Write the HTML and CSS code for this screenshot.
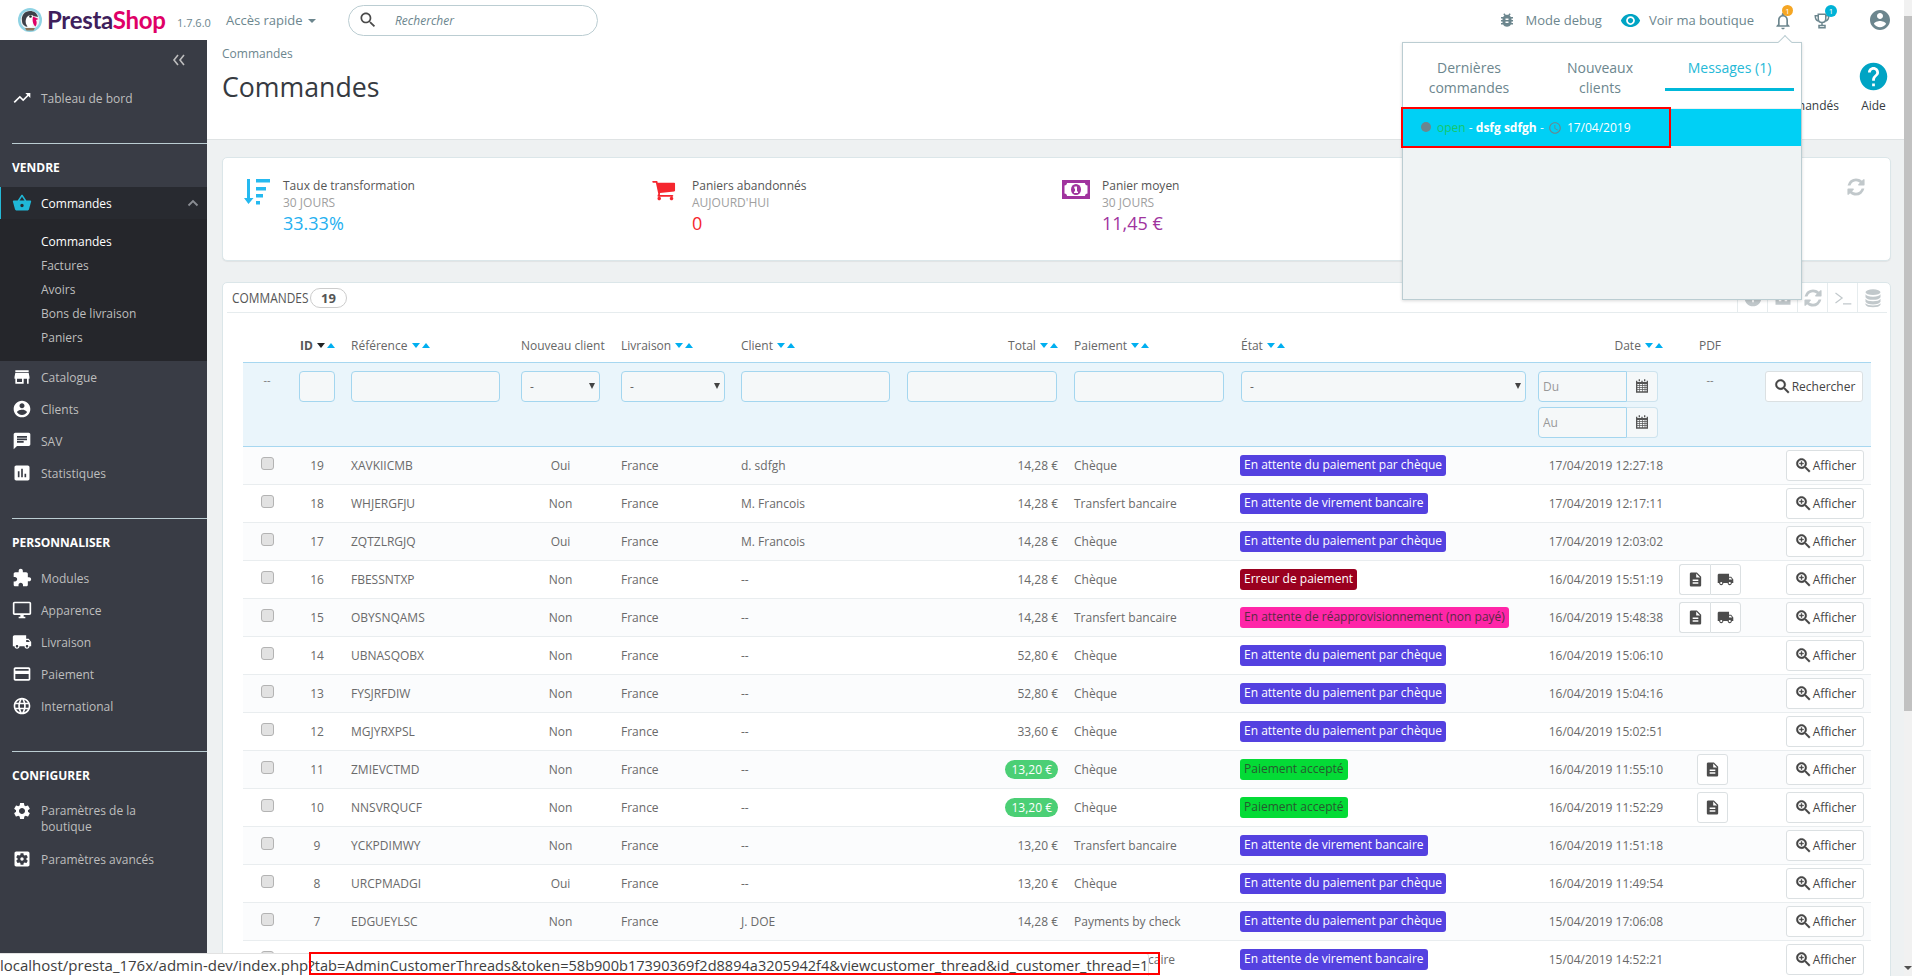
FILE: index.html
```html
<!DOCTYPE html>
<html lang="fr">
<head>
<meta charset="utf-8">
<title>Commandes - PrestaShop</title>
<link rel="stylesheet" href="styles.css">
</head>
<body>
<svg class="defs" aria-hidden="true">
  <symbol id="i-trend" viewBox="0 0 24 24"><path d="M16 6l2.29 2.29-4.88 4.88-4-4L2 16.59 3.41 18l6-6 4 4 6.3-6.29L22 12V6z"/></symbol>
  <symbol id="i-basket" viewBox="0 0 24 24"><path d="M17.21 9l-4.38-6.56c-.19-.28-.51-.42-.83-.42-.32 0-.64.14-.83.43L6.79 9H2c-.55 0-1 .45-1 1 0 .09.01.18.04.27l2.54 9.27c.23.84 1 1.46 1.92 1.46h13c.92 0 1.69-.62 1.93-1.46l2.54-9.27L23 10c0-.55-.45-1-1-1h-4.79zM9 9l3-4.4L15 9H9zm3 8c-1.1 0-2-.9-2-2s.9-2 2-2 2 .9 2 2-.9 2-2 2z"/></symbol>
  <symbol id="i-store" viewBox="0 0 24 24"><path d="M20 4H4v2h16V4zm1 10v-2l-1-5H4l-1 5v2h1v6h10v-6h4v6h2v-6h1zm-9 4H6v-4h6v4z"/></symbol>
  <symbol id="i-account" viewBox="0 0 24 24"><path d="M12 2C6.48 2 2 6.48 2 12s4.48 10 10 10 10-4.48 10-10S17.52 2 12 2zm0 3c1.66 0 3 1.34 3 3s-1.34 3-3 3-3-1.34-3-3 1.34-3 3-3zm0 14.2c-2.5 0-4.71-1.28-6-3.22.03-1.99 4-3.08 6-3.08 1.99 0 5.97 1.09 6 3.08-1.29 1.94-3.5 3.22-6 3.22z"/></symbol>
  <symbol id="i-chat" viewBox="0 0 24 24"><path d="M20 2H4c-1.1 0-1.99.9-1.99 2L2 22l4-4h14c1.1 0 2-.9 2-2V4c0-1.1-.9-2-2-2zM6 9h12v2H6V9zm8 5H6v-2h8v2zm4-6H6V6h12v2z"/></symbol>
  <symbol id="i-stats" viewBox="0 0 24 24"><path d="M19 3H5c-1.1 0-2 .9-2 2v14c0 1.1.9 2 2 2h14c1.1 0 2-.9 2-2V5c0-1.1-.9-2-2-2zM9 17H7v-7h2v7zm4 0h-2V7h2v10zm4 0h-2v-4h2v4z"/></symbol>
  <symbol id="i-puzzle" viewBox="0 0 24 24"><path d="M20.5 11H19V7c0-1.1-.9-2-2-2h-4V3.5C13 2.12 11.88 1 10.5 1S8 2.12 8 3.5V5H4c-1.1 0-1.99.9-1.99 2v3.8H3.5c1.49 0 2.7 1.21 2.7 2.7s-1.21 2.7-2.7 2.7H2V20c0 1.1.9 2 2 2h3.8v-1.5c0-1.49 1.21-2.7 2.7-2.7 1.49 0 2.7 1.21 2.7 2.7V22H17c1.1 0 2-.9 2-2v-4h1.5c1.38 0 2.5-1.12 2.5-2.5S21.88 11 20.5 11z"/></symbol>
  <symbol id="i-desktop" viewBox="0 0 24 24"><path d="M21 2H3c-1.1 0-2 .9-2 2v12c0 1.1.9 2 2 2h7v2H8v2h8v-2h-2v-2h7c1.1 0 2-.9 2-2V4c0-1.1-.9-2-2-2zm0 14H3V4h18v12z"/></symbol>
  <symbol id="i-truck" viewBox="0 0 24 24"><path d="M20 8h-3V4H3c-1.1 0-2 .9-2 2v11h2c0 1.66 1.34 3 3 3s3-1.34 3-3h6c0 1.66 1.34 3 3 3s3-1.34 3-3h2v-5l-3-4zM6 18.5c-.83 0-1.5-.67-1.5-1.5s.67-1.5 1.5-1.5 1.5.67 1.5 1.5-.67 1.5-1.5 1.5zm13.5-9l1.96 2.5H17V9.5h2.5zm-1.5 9c-.83 0-1.5-.67-1.5-1.5s.67-1.5 1.5-1.5 1.5.67 1.5 1.5-.67 1.5-1.5 1.5z"/></symbol>
  <symbol id="i-card" viewBox="0 0 24 24"><path d="M20 4H4c-1.11 0-1.99.89-1.99 2L2 18c0 1.11.89 2 2 2h16c1.11 0 2-.89 2-2V6c0-1.11-.89-2-2-2zm0 14H4v-6h16v6zm0-10H4V6h16v2z"/></symbol>
  <symbol id="i-globe" viewBox="0 0 24 24"><path d="M11.99 2C6.47 2 2 6.48 2 12s4.47 10 9.99 10C17.52 22 22 17.52 22 12S17.52 2 11.99 2zm6.93 6h-2.95c-.32-1.25-.78-2.45-1.38-3.56 1.84.63 3.37 1.91 4.33 3.56zM12 4.04c.83 1.2 1.48 2.53 1.91 3.96h-3.82c.43-1.43 1.08-2.76 1.91-3.96zM4.26 14C4.1 13.36 4 12.69 4 12s.1-1.36.26-2h3.38c-.08.66-.14 1.32-.14 2 0 .68.06 1.34.14 2H4.26zm.82 2h2.95c.32 1.25.78 2.45 1.38 3.56-1.84-.63-3.37-1.9-4.33-3.56zm2.95-8H5.08c.96-1.66 2.49-2.93 4.33-3.56C8.81 5.55 8.35 6.75 8.03 8zM12 19.96c-.83-1.2-1.48-2.53-1.91-3.96h3.82c-.43 1.43-1.08 2.76-1.91 3.96zM14.34 14H9.66c-.09-.66-.16-1.32-.16-2 0-.68.07-1.35.16-2h4.68c.09.65.16 1.32.16 2 0 .68-.07 1.34-.16 2zm.25 5.56c.6-1.11 1.06-2.31 1.38-3.56h2.95c-.96 1.65-2.49 2.93-4.33 3.56zM16.36 14c.08-.66.14-1.32.14-2 0-.68-.06-1.34-.14-2h3.38c.16.64.26 1.31.26 2s-.1 1.36-.26 2h-3.38z"/></symbol>
  <symbol id="i-gear" viewBox="0 0 24 24"><path d="M19.14 12.94c.04-.3.06-.61.06-.94 0-.32-.02-.64-.07-.94l2.03-1.58c.18-.14.23-.41.12-.61l-1.92-3.32c-.12-.22-.37-.29-.59-.22l-2.39.96c-.5-.38-1.03-.7-1.62-.94l-.36-2.54c-.04-.24-.24-.41-.48-.41h-3.84c-.24 0-.43.17-.47.41l-.36 2.54c-.59.24-1.13.57-1.62.94l-2.39-.96c-.22-.08-.47 0-.59.22L2.74 8.87c-.12.21-.08.47.12.61l2.03 1.58c-.05.3-.09.63-.09.94s.02.64.07.94l-2.03 1.58c-.18.14-.23.41-.12.61l1.92 3.32c.12.22.37.29.59.22l2.39-.96c.5.38 1.03.7 1.62.94l.36 2.54c.05.24.24.41.48.41h3.84c.24 0 .44-.17.47-.41l.36-2.54c.59-.24 1.13-.56 1.62-.94l2.39.96c.22.08.47 0 .59-.22l1.92-3.32c.12-.22.07-.47-.12-.61l-2.01-1.58zM12 15.6c-1.98 0-3.6-1.62-3.6-3.6s1.62-3.6 3.6-3.6 3.6 1.62 3.6 3.6-1.62 3.6-3.6 3.6z"/></symbol>
  <symbol id="i-gearbox" viewBox="0 0 24 24"><path d="M12 10c-1.1 0-2 .9-2 2s.9 2 2 2 2-.9 2-2-.9-2-2-2zm7-7H5c-1.11 0-2 .9-2 2v14c0 1.1.89 2 2 2h14c1.11 0 2-.9 2-2V5c0-1.1-.89-2-2-2zm-1.75 9c0 .23-.02.46-.05.68l1.48 1.16c.13.11.17.3.08.45l-1.4 2.42c-.09.15-.27.21-.43.15l-1.74-.7c-.36.28-.76.51-1.18.69l-.26 1.85c-.03.17-.18.3-.35.3h-2.8c-.17 0-.32-.13-.35-.29l-.26-1.85c-.43-.18-.82-.41-1.18-.69l-1.74.7c-.16.06-.34 0-.43-.15l-1.4-2.42c-.09-.15-.05-.34.08-.45l1.48-1.16c-.03-.23-.05-.46-.05-.69 0-.23.02-.46.05-.68l-1.48-1.16c-.13-.11-.17-.3-.08-.45l1.4-2.42c.09-.15.27-.21.43-.15l1.74.7c.36-.28.76-.51 1.18-.69l.26-1.85c.03-.17.18-.3.35-.3h2.8c.17 0 .32.13.35.29l.26 1.85c.43.18.82.41 1.18.69l1.74-.7c.16-.06.34 0 .43.15l1.4 2.42c.09.15.05.34-.08.45l-1.48 1.16c.03.23.05.46.05.69z"/></symbol>
  <symbol id="i-bug" viewBox="0 0 24 24"><path d="M20 8h-2.81c-.45-.78-1.07-1.45-1.82-1.96L17 4.41 15.59 3l-2.17 2.17C12.96 5.06 12.49 5 12 5c-.49 0-.96.06-1.41.17L8.41 3 7 4.41l1.62 1.63C7.88 6.55 7.26 7.22 6.81 8H4v2h2.09c-.05.33-.09.66-.09 1v1H4v2h2v1c0 .34.04.67.09 1H4v2h2.81c1.04 1.79 2.97 3 5.19 3s4.15-1.21 5.19-3H20v-2h-2.09c.05-.33.09-.66.09-1v-1h2v-2h-2v-1c0-.34-.04-.67-.09-1H20V8zm-6 8h-4v-2h4v2zm0-4h-4v-2h4v2z"/></symbol>
  <symbol id="i-eye" viewBox="0 0 24 24"><path d="M12 4.5C7 4.5 2.73 7.61 1 12c1.73 4.39 6 7.5 11 7.5s9.27-3.11 11-7.5c-1.73-4.39-6-7.5-11-7.5zM12 17c-2.76 0-5-2.24-5-5s2.24-5 5-5 5 2.24 5 5-2.24 5-5 5zm0-8c-1.66 0-3 1.34-3 3s1.34 3 3 3 3-1.34 3-3-1.34-3-3-3z"/></symbol>
  <symbol id="i-bell" viewBox="0 0 24 24"><path d="M12 22c1.1 0 2-.9 2-2h-4c0 1.1.9 2 2 2zm6-6v-5c0-3.07-1.63-5.64-4.5-6.32V4c0-.83-.67-1.5-1.5-1.5s-1.5.67-1.5 1.5v.68C7.64 5.36 6 7.92 6 11v5l-2 2v1h16v-1l-2-2zm-2 1H8v-6c0-2.48 1.51-4.5 4-4.5s4 2.02 4 4.5v6z"/></symbol>
  <symbol id="i-trophy" viewBox="0 0 24 24"><path fill="none" stroke="currentColor" stroke-width="2" d="M7 3h10v6c0 3-2 5-5 5s-5-2-5-5V3zM7 5H3c0 4 1 6 4 7M17 5h4c0 4-1 6-4 7M12 14v4M8 18h8v3H8z"/></symbol>
  <symbol id="i-cart" viewBox="0 0 1792 1530"><path transform="translate(-64 -192)" d="M704 1536q0 52-38 90t-90 38-90-38-38-90 38-90 90-38 90 38 38 90zm896 0q0 52-38 90t-90 38-90-38-38-90 38-90 90-38 90 38 38 90zm128-1088v512q0 24-16.500 42.500t-40.500 21.500l-1044 122q13 60 13 70 0 16-24 64h920q26 0 45 19t19 45-19 45-45 19h-1024q-26 0-45-19t-19-45q0-11 8-31.500t16-36 21.500-40 15.500-29.500l-177-823h-204q-26 0-45-19t-19-45 19-45 45-19h256q16 0 28.500 6.500t19.500 15.500 13 24.500 8 26 5.500 29.500 4.500 26h1201q26 0 45 19t19 45z"/></symbol>
  <symbol id="i-help" viewBox="0 0 24 24"><path d="M12 2C6.48 2 2 6.48 2 12s4.48 10 10 10 10-4.48 10-10S17.52 2 12 2zm1 17h-2v-2h2v2zm2.07-7.75l-.9.92C13.45 12.9 13 13.5 13 15h-2v-.5c0-1.1.45-2.1 1.17-2.83l1.24-1.26c.37-.36.59-.86.59-1.41 0-1.1-.9-2-2-2s-2 .9-2 2H8c0-2.21 1.79-4 4-4s4 1.79 4 4c0 .88-.36 1.68-.93 2.25z"/></symbol>
  <symbol id="i-refresh" viewBox="0 0 1792 1792"><path d="M1639 1056q0 5-1 7-64 268-268 434.500t-478 166.500q-146 0-282.500-55t-243.500-157l-129 129q-19 19-45 19t-45-19-19-45v-448q0-26 19-45t45-19h448q26 0 45 19t19 45-19 45l-137 137q71 66 161 102t187 36q134 0 250-65t186-179q11-17 53-117 8-23 30-23h192q13 0 22.500 9.500t9.500 22.500zm25-800v448q0 26-19 45t-45 19h-448q-26 0-45-19t-19-45 19-45l138-138q-148-137-349-137-134 0-250 65t-186 179q-11 17-53 117-8 23-30 23h-199q-13 0-22.500-9.500t-9.500-22.500v-7q65-268 270-434.500t480-166.500q146 0 284 55.500t245 156.500l130-129q19-19 45-19t45 19 19 45z"/></symbol>
  <symbol id="i-clock" viewBox="0 0 24 24"><path d="M11.99 2C6.47 2 2 6.48 2 12s4.47 10 9.99 10C17.52 22 22 17.52 22 12S17.52 2 11.99 2zM12 20c-4.42 0-8-3.58-8-8s3.58-8 8-8 8 3.58 8 8-3.58 8-8 8zm.5-13H11v6l5.25 3.15.75-1.23-4.5-2.67z"/></symbol>
  <symbol id="i-search" viewBox="0 0 24 24"><path d="M15.5 14h-.79l-.28-.27C15.41 12.59 16 11.11 16 9.5 16 5.91 13.09 3 9.5 3S3 5.91 3 9.5 5.91 16 9.5 16c1.61 0 3.09-.59 4.23-1.57l.27.28v.79l5 4.99L20.49 19l-4.99-5zm-6 0C7.01 14 5 11.99 5 9.5S7.01 5 9.5 5 14 7.01 14 9.5 11.99 14 9.5 14z"/></symbol>
  <symbol id="i-zoom" viewBox="0 0 24 24"><path d="M15.5 14h-.79l-.28-.27C15.41 12.59 16 11.11 16 9.5 16 5.91 13.09 3 9.5 3S3 5.91 3 9.5 5.91 16 9.5 16c1.61 0 3.09-.59 4.23-1.57l.27.28v.79l5 4.99L20.49 19l-4.99-5zm-6 0C7.01 14 5 11.99 5 9.5S7.01 5 9.5 5 14 7.01 14 9.5 11.99 14 9.5 14zM12 10h-2v2H9v-2H7V9h2V7h1v2h2v1z"/></symbol>
  <symbol id="i-doc" viewBox="0 0 24 24"><path d="M14 2H6c-1.1 0-1.99.9-1.99 2L4 20c0 1.1.89 2 1.99 2H18c1.1 0 2-.9 2-2V8l-6-6zm2 16H8v-2h8v2zm0-4H8v-2h8v2zm-3-5V3.5L18.5 9H13z"/></symbol>
  <symbol id="i-cal" viewBox="0 0 24 24"><path d="M7 2h2v3H7zM15 2h2v3h-2z"/><path fill-rule="evenodd" d="M3 4h2v2h6V4h2v2h6V4h2v18H3zM5 9v2h3V9zm4 0v2h3V9zm4 0v2h3V9zm4 0v2h2V9zM5 12v2h3v-2zm4 0v2h3v-2zm4 0v2h3v-2zm4 0v2h2v-2zM5 15v2h3v-2zm4 0v2h3v-2zm4 0v2h3v-2zm4 0v2h2v-2zM5 18v2h3v-2zm4 0v2h3v-2zm4 0v2h3v-2zm4 0v2h2v-2z"/></symbol>
  <symbol id="i-plus" viewBox="0 0 24 24"><path d="M12 2C6.48 2 2 6.48 2 12s4.48 10 10 10 10-4.48 10-10S17.52 2 12 2zm5 11h-4v4h-2v-4H7v-2h4V7h2v4h4v2z"/></symbol>
  <symbol id="i-export" viewBox="0 0 24 24"><path d="M3 4h18v16H3zM7 16h3v-4l2 2 2-2v4h3V8h-3l-2 2-2-2H7z" fill-rule="evenodd"/></symbol>
  <symbol id="i-term" viewBox="0 0 24 24"><path fill="none" stroke="currentColor" stroke-width="1.4" d="M3 6l8 6-8 6M12 19h10"/></symbol>
  <symbol id="i-db" viewBox="0 0 24 24"><ellipse cx="12" cy="5" rx="9" ry="3.4"/><path d="M3 7.5c1 2 4 3 9 3s8-1 9-3V11c-1 2-4 3.200-9 3.200S4 13 3 11zM3 13c1 2 4 3 9 3s8-1 9-3v3.500c-1 2-4 3.200-9 3.200S4 18.500 3 16.500zM3 18.300c1.500 1.700 5 2.700 9 2.700s7.500-1 9-2.700V20c-1 2-4 3-9 3s-8-1-9-3z"/></symbol>
</svg>

<div class="app">
  <header class="topbar">
    <a class="logo">
      <svg class="logo-bird" viewBox="0 0 24 24" aria-hidden="true">
        <circle cx="12" cy="12" r="12" fill="#8fd3e4"/>
        <circle cx="12" cy="12" r="9.500" fill="#eef3f4"/>
        <path d="M4 13C3 7 7 3 12 3c4 0 7 2 8 6-3-1-5-1-7 0-3 1-4 4-3 9-1 1-2 1-3 0-2-1-3-3-3-5z" fill="#3d4149"/>
        <path d="M8 11c1-3 3-4 5-4 2 0 3 1 3 3l-2 9-4 0c-2-2-3-5-2-8z" fill="#fff"/>
        <circle cx="12.500" cy="8.500" r="1.300" fill="#23262b"/>
        <path d="M15 8.500l5.500 2.500-2.500 1c1 2 1 4-.5 6.500-2.500-2-3.500-6-2.500-10z" fill="#df0067"/>
        <path d="M7 20h10l-1.500 2.500h-7z" fill="#8a7458"/>
      </svg>
      <span class="logo-text"><span class="logo-a">Presta</span><span class="logo-b">Shop</span></span>
    </a>
    <span class="version">1.7.6.0</span>
    <a class="quick">Accès rapide<i class="tri"></i></a>
    <div class="searchbox">
      <svg class="ico-search"><use href="#i-search"/></svg>
      <span class="search-ph">Rechercher</span>
    </div>
    <div class="top-right">
      <svg class="ico-top gray"><use href="#i-bug"/></svg>
      <span class="top-link">Mode debug</span>
      <svg class="ico-eye"><use href="#i-eye"/></svg>
      <span class="top-link">Voir ma boutique</span>
      <span class="notif bell"><svg class="ico-bell"><use href="#i-bell"/></svg><b class="dot dot-o">1</b></span>
      <span class="notif trophy"><svg class="ico-trophy"><use href="#i-trophy"/></svg><b class="dot dot-c">1</b></span>
      <svg class="ico-user"><use href="#i-account"/></svg>
    </div>
  </header>

  <div class="layout">
    <aside class="sidebar">
      <div class="collapse"><svg viewBox="0 0 14 12" class="ico-coll"><path d="M6 1L2 6l4 5M12 1L8 6l4 5"/></svg></div>
      <a class="item"><svg><use href="#i-trend"/></svg><span>Tableau de bord</span></a>
      <div class="sec sec-first">VENDRE</div>
      <a class="item active"><svg><use href="#i-basket"/></svg><span>Commandes</span><svg class="ico-chev" viewBox="0 0 12 8"><path d="M1.500 6.500L6 2l4.500 4.500"/></svg></a>
      <div class="sub">
        <a class="sub-item on">Commandes</a>
        <a class="sub-item">Factures</a>
        <a class="sub-item">Avoirs</a>
        <a class="sub-item">Bons de livraison</a>
        <a class="sub-item">Paniers</a>
      </div>
      <a class="item"><svg><use href="#i-store"/></svg><span>Catalogue</span></a>
      <a class="item"><svg><use href="#i-account"/></svg><span>Clients</span></a>
      <a class="item"><svg><use href="#i-chat"/></svg><span>SAV</span></a>
      <a class="item"><svg><use href="#i-stats"/></svg><span>Statistiques</span></a>
      <div class="sec">PERSONNALISER</div>
      <a class="item"><svg><use href="#i-puzzle"/></svg><span>Modules</span></a>
      <a class="item"><svg><use href="#i-desktop"/></svg><span>Apparence</span></a>
      <a class="item"><svg><use href="#i-truck"/></svg><span>Livraison</span></a>
      <a class="item"><svg><use href="#i-card"/></svg><span>Paiement</span></a>
      <a class="item"><svg><use href="#i-globe"/></svg><span>International</span></a>
      <div class="sec">CONFIGURER</div>
      <a class="item item-two"><svg><use href="#i-gear"/></svg><span>Paramètres de la boutique</span></a>
      <a class="item"><svg><use href="#i-gearbox"/></svg><span>Paramètres avancés</span></a>
    </aside>

    <main class="main">
      <section class="head">
        <div class="head-left">
          <div class="crumb">Commandes</div>
          <h1 class="title">Commandes</h1>
        </div>
        <div class="toolbar">
          <a class="tool"><span class="tool-label">Modules recommandés</span></a>
          <a class="tool"><svg class="ico-help"><use href="#i-help"/></svg><span class="tool-label">Aide</span></a>
        </div>
      </section>

      <section class="kpis">
        <div class="kpi kpi-1">
          <svg class="kpi-ico" viewBox="0 0 26 28" aria-hidden="true"><path fill="#25b9f0" d="M3 1h3v19h3.500L4.500 26 0 20h3zM12 1h14v3.500H12zM12 9h10v3.500H12zM12 16h7v3.500h-7zM12 23h4v3.500h-4z"/></svg>
          <div><div class="kpi-t">Taux de transformation</div><div class="kpi-s">30 JOURS</div><div class="kpi-v v-blue">33.33%</div></div>
        </div>
        <div class="kpi kpi-2">
          <svg class="kpi-ico cart-ico"><use href="#i-cart"/></svg>
          <div><div class="kpi-t">Paniers abandonnés</div><div class="kpi-s">AUJOURD'HUI</div><div class="kpi-v v-red">0</div></div>
        </div>
        <div class="kpi kpi-3">
          <svg class="kpi-ico" viewBox="0 0 28 19" aria-hidden="true"><path fill="#a0339e" fill-rule="evenodd" d="M0 0h28v19H0zM5 3c0 1.500-1 2.500-2.500 2.500v8C4 13.500 5 14.500 5 16h18c0-1.500 1-2.500 2.500-2.500v-8C24 5.500 23 4.500 23 3z"/><ellipse cx="14" cy="9.500" rx="5" ry="5.500" fill="#a0339e"/><path fill="#fff" d="M12.500 6.500h2.500v5h1v1.500h-4v-1.500h1V8.500h-1z"/></svg>
          <div><div class="kpi-t">Panier moyen</div><div class="kpi-s">30 JOURS</div><div class="kpi-v v-purple">11,45 €</div></div>
        </div>
        <svg class="kpi-refresh"><use href="#i-refresh"/></svg>
      </section>

      <section class="panel">
        <div class="panel-head">
          <span class="panel-title">COMMANDES</span>
          <span class="panel-count">19</span>
          <div class="panel-tools">
            <span class="ptool"><svg><use href="#i-plus"/></svg></span>
            <span class="ptool"><svg><use href="#i-export"/></svg></span>
            <span class="ptool"><svg><use href="#i-refresh"/></svg></span>
            <span class="ptool"><svg><use href="#i-term"/></svg></span>
            <span class="ptool"><svg><use href="#i-db"/></svg></span>
          </div>
        </div>
        <table class="grid">
          <colgroup>
            <col class="c-check"><col class="c-id"><col class="c-ref"><col class="c-new"><col class="c-del"><col class="c-cli"><col class="c-tot"><col class="c-pay"><col class="c-sta"><col class="c-dat"><col class="c-pdf"><col class="c-act">
          </colgroup>
          <thead>
            <tr class="heads">
              <th></th>
              <th class="bold">ID <i class="dn dark"></i><i class="up"></i></th>
              <th>Référence <i class="dn"></i><i class="up"></i></th>
              <th class="cnew">Nouveau client</th>
              <th>Livraison <i class="dn"></i><i class="up"></i></th>
              <th>Client <i class="dn"></i><i class="up"></i></th>
              <th class="right">Total <i class="dn"></i><i class="up"></i></th>
              <th>Paiement <i class="dn"></i><i class="up"></i></th>
              <th>État <i class="dn"></i><i class="up"></i></th>
              <th class="right">Date <i class="dn"></i><i class="up"></i></th>
              <th class="cpdf">PDF</th>
              <th></th>
            </tr>
            <tr class="filters">
              <td class="center"><span class="dash">--</span></td>
              <td><input class="fi w-id"></td>
              <td><input class="fi w-ref"></td>
              <td><div class="sel w-new"><select class="fs"><option>-</option></select></div></td>
              <td><div class="sel w-del"><select class="fs"><option>-</option></select></div></td>
              <td><input class="fi w-ref"></td>
              <td><input class="fi w-tot"></td>
              <td><input class="fi w-tot"></td>
              <td><div class="sel w-sta"><select class="fs"><option>-</option></select></div></td>
              <td>
                <div class="dategroup"><input class="fd" placeholder="Du"><span class="addon"><svg><use href="#i-cal"/></svg></span></div>
                <div class="dategroup"><input class="fd" placeholder="Au"><span class="addon"><svg><use href="#i-cal"/></svg></span></div>
              </td>
              <td class="cpdf"><span class="dash">--</span></td>
              <td class="right"><button class="btn btn-search"><svg><use href="#i-search"/></svg>Rechercher</button></td>
            </tr>
          </thead>
          <tbody>
            <tr><td class="center"><i class="chk"></i></td><td class="tid">19</td><td>XAVKIICMB</td><td class="cnew">Oui</td><td>France</td><td>d. sdfgh</td><td class="right">14,28 €</td><td>Chèque</td><td><span class="badge b-blue">En attente du paiement par chèque</span></td><td class="right">17/04/2019 12:27:18</td><td class="cpdf"></td><td class="right"><button class="btn"><svg><use href="#i-zoom"/></svg>Afficher</button></td></tr>
            <tr><td class="center"><i class="chk"></i></td><td class="tid">18</td><td>WHJERGFJU</td><td class="cnew">Non</td><td>France</td><td>M. Francois</td><td class="right">14,28 €</td><td>Transfert bancaire</td><td><span class="badge b-blue">En attente de virement bancaire</span></td><td class="right">17/04/2019 12:17:11</td><td class="cpdf"></td><td class="right"><button class="btn"><svg><use href="#i-zoom"/></svg>Afficher</button></td></tr>
            <tr><td class="center"><i class="chk"></i></td><td class="tid">17</td><td>ZQTZLRGJQ</td><td class="cnew">Oui</td><td>France</td><td>M. Francois</td><td class="right">14,28 €</td><td>Chèque</td><td><span class="badge b-blue">En attente du paiement par chèque</span></td><td class="right">17/04/2019 12:03:02</td><td class="cpdf"></td><td class="right"><button class="btn"><svg><use href="#i-zoom"/></svg>Afficher</button></td></tr>
            <tr><td class="center"><i class="chk"></i></td><td class="tid">16</td><td>FBESSNTXP</td><td class="cnew">Non</td><td>France</td><td>--</td><td class="right">14,28 €</td><td>Chèque</td><td><span class="badge b-red">Erreur de paiement</span></td><td class="right">16/04/2019 15:51:19</td><td class="cpdf"><span class="bgroup"><button class="ib"><svg><use href="#i-doc"/></svg></button><button class="ib"><svg><use href="#i-truck"/></svg></button></span></td><td class="right"><button class="btn"><svg><use href="#i-zoom"/></svg>Afficher</button></td></tr>
            <tr><td class="center"><i class="chk"></i></td><td class="tid">15</td><td>OBYSNQAMS</td><td class="cnew">Non</td><td>France</td><td>--</td><td class="right">14,28 €</td><td>Transfert bancaire</td><td><span class="badge b-pink">En attente de réapprovisionnement (non payé)</span></td><td class="right">16/04/2019 15:48:38</td><td class="cpdf"><span class="bgroup"><button class="ib"><svg><use href="#i-doc"/></svg></button><button class="ib"><svg><use href="#i-truck"/></svg></button></span></td><td class="right"><button class="btn"><svg><use href="#i-zoom"/></svg>Afficher</button></td></tr>
            <tr><td class="center"><i class="chk"></i></td><td class="tid">14</td><td>UBNASQOBX</td><td class="cnew">Non</td><td>France</td><td>--</td><td class="right">52,80 €</td><td>Chèque</td><td><span class="badge b-blue">En attente du paiement par chèque</span></td><td class="right">16/04/2019 15:06:10</td><td class="cpdf"></td><td class="right"><button class="btn"><svg><use href="#i-zoom"/></svg>Afficher</button></td></tr>
            <tr><td class="center"><i class="chk"></i></td><td class="tid">13</td><td>FYSJRFDIW</td><td class="cnew">Non</td><td>France</td><td>--</td><td class="right">52,80 €</td><td>Chèque</td><td><span class="badge b-blue">En attente du paiement par chèque</span></td><td class="right">16/04/2019 15:04:16</td><td class="cpdf"></td><td class="right"><button class="btn"><svg><use href="#i-zoom"/></svg>Afficher</button></td></tr>
            <tr><td class="center"><i class="chk"></i></td><td class="tid">12</td><td>MGJYRXPSL</td><td class="cnew">Non</td><td>France</td><td>--</td><td class="right">33,60 €</td><td>Chèque</td><td><span class="badge b-blue">En attente du paiement par chèque</span></td><td class="right">16/04/2019 15:02:51</td><td class="cpdf"></td><td class="right"><button class="btn"><svg><use href="#i-zoom"/></svg>Afficher</button></td></tr>
            <tr><td class="center"><i class="chk"></i></td><td class="tid">11</td><td>ZMIEVCTMD</td><td class="cnew">Non</td><td>France</td><td>--</td><td class="right"><span class="pill">13,20 €</span></td><td>Chèque</td><td><span class="badge b-green">Paiement accepté</span></td><td class="right">16/04/2019 11:55:10</td><td class="cpdf"><button class="ib ib-one"><svg><use href="#i-doc"/></svg></button></td><td class="right"><button class="btn"><svg><use href="#i-zoom"/></svg>Afficher</button></td></tr>
            <tr><td class="center"><i class="chk"></i></td><td class="tid">10</td><td>NNSVRQUCF</td><td class="cnew">Non</td><td>France</td><td>--</td><td class="right"><span class="pill">13,20 €</span></td><td>Chèque</td><td><span class="badge b-green">Paiement accepté</span></td><td class="right">16/04/2019 11:52:29</td><td class="cpdf"><button class="ib ib-one"><svg><use href="#i-doc"/></svg></button></td><td class="right"><button class="btn"><svg><use href="#i-zoom"/></svg>Afficher</button></td></tr>
            <tr><td class="center"><i class="chk"></i></td><td class="tid">9</td><td>YCKPDIMWY</td><td class="cnew">Non</td><td>France</td><td>--</td><td class="right">13,20 €</td><td>Transfert bancaire</td><td><span class="badge b-blue">En attente de virement bancaire</span></td><td class="right">16/04/2019 11:51:18</td><td class="cpdf"></td><td class="right"><button class="btn"><svg><use href="#i-zoom"/></svg>Afficher</button></td></tr>
            <tr><td class="center"><i class="chk"></i></td><td class="tid">8</td><td>URCPMADGI</td><td class="cnew">Oui</td><td>France</td><td>--</td><td class="right">13,20 €</td><td>Chèque</td><td><span class="badge b-blue">En attente du paiement par chèque</span></td><td class="right">16/04/2019 11:49:54</td><td class="cpdf"></td><td class="right"><button class="btn"><svg><use href="#i-zoom"/></svg>Afficher</button></td></tr>
            <tr><td class="center"><i class="chk"></i></td><td class="tid">7</td><td>EDGUEYLSC</td><td class="cnew">Non</td><td>France</td><td>J. DOE</td><td class="right">14,28 €</td><td>Payments by check</td><td><span class="badge b-blue">En attente du paiement par chèque</span></td><td class="right">15/04/2019 17:06:08</td><td class="cpdf"></td><td class="right"><button class="btn"><svg><use href="#i-zoom"/></svg>Afficher</button></td></tr>
            <tr class="last"><td class="center"><i class="chk"></i></td><td></td><td></td><td></td><td></td><td></td><td></td><td class="partial">caire</td><td><span class="badge b-blue">En attente de virement bancaire</span></td><td class="right">15/04/2019 14:52:21</td><td class="cpdf"></td><td class="right"><button class="btn"><svg><use href="#i-zoom"/></svg>Afficher</button></td></tr>
          </tbody>
        </table>
      </section>
    </main>
  </div>
</div>

<div class="scrollbar">
  <i class="sb-up"></i>
  <div class="sb-thumb"></div>
  <div class="sb-track"></div>
  <i class="sb-down"></i>
</div>

<div class="dropdown">
  <i class="dd-arrow"></i>
  <div class="dd-tabs">
    <a class="dd-tab">Dernières<br>commandes</a>
    <a class="dd-tab">Nouveaux<br>clients</a>
    <a class="dd-tab on">Messages (1)</a>
  </div>
  <a class="dd-row">
    <i class="dd-dot"></i>
    <span class="dd-open">open</span>
    <span class="dd-sep">&nbsp;-&nbsp;</span><b>dsfg sdfgh</b><span class="dd-sep">&nbsp;-&nbsp;</span>
    <svg class="dd-clock"><use href="#i-clock"/></svg>
    <span class="dd-date">17/04/2019</span>
  </a>
</div>
<div class="redbox redbox-row"></div>

<div class="status"><span class="st-a">localhost/presta_176x/admin-dev/index.php?</span><span class="st-b">tab=AdminCustomerThreads&amp;token=58b900b17390369f2d8894a3205942f4&amp;viewcustomer_thread&amp;id_customer_thread=1</span></div>
<div class="redbox redbox-url"></div>
</body>
</html>
```

FILE: styles.css
```css
* { box-sizing: border-box; }
html, body { margin: 0; height: 976px; overflow: hidden; }
body { display: flex; position: relative; font-family: "Open Sans", sans-serif; font-size: 12px; color: #666; background: #eef1f2; }
.defs { position: absolute; width: 0; height: 0; }
a { text-decoration: none; color: inherit; }
i { font-style: normal; }

.app { flex: 1; min-width: 0; display: flex; flex-direction: column; }

/* scrollbar */
.scrollbar { flex: none; width: 8px; display: flex; flex-direction: column; background: #f1f1f1; }
.sb-up { height: 16px; flex: none; }
.sb-thumb { height: 695px; flex: none; background: #c1c1c1; }
.sb-track { flex: 1; }
.sb-down { flex: none; height: 16px; position: relative; }
.sb-down::after { content: ""; position: absolute; left: 0; top: 6px; border: 4px solid transparent; border-top: 4px solid #505050; border-bottom: 0; }

/* top bar */
.topbar { flex: none; height: 40px; background: #fff; display: flex; align-items: center; padding-left: 18px; }
.logo { display: flex; align-items: center; width: 159px; flex: none; }
.logo-bird { width: 24px; height: 24px; flex: none; }
.logo-text { margin-left: 5px; font-family: Lato, sans-serif; font-weight: 700; font-size: 24px; letter-spacing: -.3px; line-height: 30px; }
.logo-a { color: #3f1f5c; }
.logo-b { color: #df0067; }
.version { font-size: 11px; color: #6c868e; width: 49px; flex: none; padding-top: 4px; }
.quick { font-size: 13px; color: #6c868e; flex: none; width: 122px; }
.tri { display: inline-block; margin-left: 5px; vertical-align: 2px; border: 4px solid transparent; border-top: 4px solid #6c868e; border-bottom: 0; }
.searchbox { width: 250px; height: 31px; border: 1px solid #bbcdd2; border-radius: 16px; display: flex; align-items: center; padding-left: 9px; flex: none; }
.ico-search { width: 20px; height: 20px; fill: #4a4a4a; }
.search-ph { margin-left: 17px; font-style: italic; font-size: 12px; color: #6c868e; }
.top-right { margin-left: auto; display: flex; align-items: center; color: #6c868e; height: 40px; }
.ico-top { width: 18px; height: 18px; fill: #6c868e; margin-right: 10px; }
.top-link { font-size: 13px; color: #6c868e; }
.ico-eye { width: 21px; height: 21px; fill: #00a4c4; margin: 0 8px 0 18px; }
.notif { position: relative; display: block; width: 18px; height: 22px; }
.bell { margin-left: 20px; }
.trophy { margin-left: 21px; }
.ico-bell { width: 20px; height: 22px; fill: #6c868e; position: absolute; left: -1px; top: 1px; }
.ico-trophy { width: 18px; height: 20px; color: #6c868e; position: absolute; left: 0; top: 2px; }
.dot { position: absolute; top: -4px; left: 8px; width: 11px; height: 11px; border-radius: 50%; font-weight: 400; font-size: 8px; line-height: 11px; text-align: center; color: #fff; }
.dot-o { background: #f5a623; }
.dot-c { background: #00b2d6; left: 12px; width: 12px; height: 12px; line-height: 12px; }
.ico-user { width: 24px; height: 24px; fill: #6c868e; margin: 0 12px 0 37px; }

/* layout */
.layout { flex: 1; display: flex; min-height: 0; }
.sidebar { flex: none; width: 207px; background: #393c45; color: #bebebe; font-size: 12px; }
.collapse { height: 42px; display: flex; justify-content: flex-end; padding: 14px 21px 0 0; }
.ico-coll { width: 14px; height: 12px; fill: none; stroke: #bebebe; stroke-width: 1.600; }
.item { height: 32px; display: flex; align-items: center; padding-left: 12px; }
.item svg { width: 20px; height: 20px; fill: #fff; flex: none; margin-right: 9px; }
.item-two { height: 48px; line-height: 16px; }
.item-two svg { margin-top: -16px; }
.item-two span { width: 110px; }
.active { background: #282a30; color: #fff; border-left: 1px solid #25b9d7; padding-left: 11px; position: relative; }
.active svg { fill: #1fb8d8; }
.active .ico-chev { position: absolute; left: 186px; top: 12px; width: 12px; height: 8px; fill: none; stroke: #8a8d93; stroke-width: 1.800; margin: 0; }
.sub { background: #25262b; height: 142px; padding-top: 11px; }
.sub-item { display: block; height: 24px; line-height: 24px; padding-left: 41px; }
.sub-item.on { color: #fff; }
.sec { margin: 29px 0 0 12px; height: 44px; padding-top: 4px; border-top: 1px solid #bbcdd2; display: flex; align-items: center; color: #fff; font-weight: 700; font-size: 12px; }
.sec-first { margin-top: 29px; }

/* main */
.main { flex: 1; min-width: 0; overflow: hidden; }
.head { height: 100px; background: #fff; border-bottom: 1px solid #dfe3e4; display: flex; justify-content: space-between; padding: 6px 14px 0 15px; }
.crumb { font-size: 12px; line-height: 16px; color: #6c868e; }
.title { margin: 8px 0 0; font-weight: 400; font-size: 26.700px; line-height: 34px; color: #363a41; }
.toolbar { display: flex; gap: 18px; padding-top: 19px; }
.tool { display: flex; flex-direction: column; align-items: center; justify-content: flex-end; height: 49px; }
.tool-label { font-size: 12px; line-height: 16px; color: #363a41; }
.ico-help { width: 33px; height: 33px; fill: #00a4c4; margin-bottom: 5.500px; flex: none; }

.kpis { margin: 17px 13px 0 15px; height: 104px; background: #fff; border: 1px solid #dbe6e9; border-radius: 5px; box-shadow: 0 1px 1px rgba(0,0,0,.06); display: flex; align-items: flex-start; padding: 19px 0 0 21px; position: relative; }
.kpi { display: flex; flex: none; width: 409px; }
.kpi-ico { width: 26px; height: 28px; flex: none; margin: 1px 13px 0 0; }
.kpi-3 .kpi-ico { width: 28px; height: 19px; margin: 3px 12px 0 0; }
.cart-ico { width: 25px; height: 21px; fill: #f5262e; margin: 3px 15px 0 -1px; }
.kpi-t { line-height: 17px; font-size: 12px; color: #555; }
.kpi-s { line-height: 17px; font-size: 12px; color: #a0a0a0; }
.kpi-v { font-size: 18px; line-height: 24px; margin-top: 0; }
.v-blue { color: #25b0f0; }
.v-red { color: #f5262e; }
.v-purple { color: #a0339e; }
.kpi-refresh { width: 20px; height: 20px; margin: 0 24px 0 auto; fill: #c1c8cb; }

.panel { margin: 21px 13px 0 15px; background: #fff; border: 1px solid #dbe6e9; border-radius: 5px 5px 0 0; }
.panel-head { height: 30px; margin: 0 3px 0 4px; padding-left: 5px; border-bottom: 1px solid #e6ecee; display: flex; align-items: center; }
.panel-title { display: inline-block; font-family: "Open Sans", sans-serif; font-size: 14px; color: #555; width: 78px; white-space: nowrap; transform: scaleX(.85); transform-origin: left center; }
.panel-count { width: 37px; height: 20px; border: 1px solid #ccc; border-radius: 10px; font-weight: 700; font-size: 13px; line-height: 18px; text-align: center; color: #555; }
.panel-tools { margin-left: auto; display: flex; align-self: stretch; }
.ptool { width: 30px; border-left: 1px solid #e6ecee; display: flex; align-items: center; justify-content: center; }
.ptool svg { width: 20px; height: 20px; fill: #c1c8cb; color: #c1c8cb; }

.grid { border-collapse: collapse; table-layout: fixed; width: 1628px; margin-left: 20px; }
.c-check { width: 48px; } .c-id { width: 52px; } .c-ref { width: 170px; } .c-new { width: 100px; } .c-del { width: 120px; } .c-cli { width: 166px; } .c-tot { width: 167px; } .c-pay { width: 167px; } .c-sta { width: 297px; } .c-dat { width: 141px; } .c-pdf { width: 86px; } .c-act { width: 114px; }

.grid th, .grid td { padding: 0 8px; white-space: nowrap; }
.heads th { height: 49px; vertical-align: bottom; padding-bottom: 8px; font-weight: 400; font-size: 12px; line-height: 16px; text-align: left; color: #666; }
.heads .bold { font-weight: 700; color: #555; padding-left: 9px; }
.right { text-align: right !important; }
.center { text-align: center; }
.cnew { text-align: center !important; padding-right: 13px !important; }
.cpdf { text-align: center !important; padding-right: 16px !important; }
.dn, .up { display: inline-block; border-left: 4px solid transparent; border-right: 4px solid transparent; vertical-align: 2px; }
.dn { border-top: 5px solid #00aff0; margin: 0 2px 0 1px; }
.up { border-bottom: 5px solid #00aff0; }
.dn.dark { border-top-color: #222; }

.filters td { background: #eaf5fb; height: 84px; vertical-align: top; padding-top: 8px; border-top: 1px solid #a7d7f0; border-bottom: 1px solid #a7d7f0; }
.grid tbody td:last-child { padding-right: 7px; }
.dash { color: #777; font-size: 11px; line-height: 18px; }
.fi, .fs, .fd { display: block; height: 31px; background: #f5f8f9; border: 1px solid #a4d6ef; border-radius: 4px; padding: 0 8px; font: 12px "Open Sans", sans-serif; color: #666; outline: 0; }
.w-id { width: 36px; } .w-ref { width: 149px; } .w-new { width: 79px; } .w-del { width: 104px; } .w-tot { width: 150px; } .w-sta { width: 285px; }
.sel { position: relative; }
.fs { width: 100%; appearance: none; -webkit-appearance: none; }
.sel::after { content: ""; position: absolute; right: 5px; top: 12px; border-left: 3px solid transparent; border-right: 3px solid transparent; border-top: 6px solid #444; }
.dategroup { display: flex; width: 120px; height: 31px; margin-bottom: 5px; }
.fd { flex: 1; min-width: 0; border-radius: 4px 0 0 4px; padding: 0 4px; }
.fd::placeholder { color: #999; opacity: 1; }
.addon { width: 31px; flex: none; border: 1px solid #cde3ee; border-left: 0; border-radius: 0 4px 4px 0; background: #f5f8f9; display: flex; align-items: center; justify-content: center; }
.addon svg { width: 16px; height: 16px; fill: #555; }

.btn, .ib { background: #fff; border: 1px solid #dbe0e2; border-radius: 3px; height: 31px; font: 12px "Open Sans", sans-serif; color: #444; cursor: pointer; padding: 0; vertical-align: middle; }
.btn { width: 78px; display: inline-flex; align-items: center; justify-content: center; }
.btn svg { width: 19px; height: 19px; fill: #444; stroke: #444; stroke-width: .6; margin-right: 0; flex: none; }
.btn-search { width: 98px; }
.ib { width: 31px; display: inline-flex; align-items: center; justify-content: center; }
.ib svg { width: 17px; height: 17px; fill: #4c4c4c; }
.bgroup { display: inline-flex; }
.bgroup .ib:first-child { border-radius: 3px 0 0 3px; border-right: 0; }
.bgroup .ib:last-child { border-radius: 0 3px 3px 0; }
.ib-one { margin-left: 4px; }

tbody tr { height: 38px; background: #fff; }
tbody tr:nth-child(odd) { background: #fbfcfd; }
tbody td { border-bottom: 1px solid #e9edef; font-size: 12px; color: #6a6a6a; vertical-align: middle; }
.tid { text-align: center; }
.partial { text-align: left; padding-left: 82px !important; }
.chk { display: block; width: 13px; height: 13px; margin: -4px auto 0; background: #e2e2e2; border: 1px solid #b3b3b3; border-radius: 3px; }
.badge { display: inline-block; height: 21px; line-height: 20px; border-radius: 3px; padding: 0 4px; margin-left: -1px; vertical-align: middle; }
.b-blue { background: #5441e0; color: #fff; }
.b-red { background: #9a001f; color: #fff; }
.b-pink { background: #ff26a8; color: #5b2a44; }
.b-green { background: #04db36; color: #265a2f; }
.pill { display: inline-block; height: 19px; line-height: 19px; border-radius: 10px; padding: 0 6px; background: #4bcf75; color: #fff; }

/* dropdown */
.dropdown { position: absolute; left: 1402px; top: 42px; width: 400px; height: 258px; background: #eff3f4; border: 1px solid #bbcdd2; box-shadow: 0 1px 3px rgba(0,0,0,.15); z-index: 5; }
.dd-arrow { position: absolute; left: 377px; top: -6px; width: 10px; height: 10px; background: #fff; border-left: 1px solid #bbcdd2; border-top: 1px solid #bbcdd2; transform: rotate(45deg); }
.dd-tabs { height: 66px; background: #fff; display: flex; padding: 15px 7px 0 0; border-bottom: 1px solid #eef1f2; position: relative; }
.dd-tab { width: 130px; text-align: center; font-size: 14px; line-height: 20px; color: #6c868e; }
.dd-tab:first-child { width: 133px; }
.dd-tab:nth-child(2) { width: 131px; }
.dd-tab.on { color: #25b9d7; border-bottom: 3px solid #00b8d9; height: 33px; align-self: flex-start; margin-left: 0; }
.dd-row { height: 37px; background: #00d0f5; display: flex; align-items: center; padding-left: 18px; font-size: 12px; color: #fff; }
.dd-dot { width: 10px; height: 10px; border-radius: 50%; background: #6c868e; margin: -2px 6px 0 0; flex: none; }
.dd-open { color: #14c86e; }
.dd-sep { color: #e6f8fc; }
.dd-clock { width: 14px; height: 14px; fill: #6c868e; margin: 0 5px 0 1px; flex: none; }
.redbox { position: absolute; border: 2px solid #f00; z-index: 8; pointer-events: none; }
.redbox-row { left: 1401px; top: 107px; width: 270px; height: 41px; }
.redbox-url { left: 309px; top: 952px; width: 851px; height: 23px; }

/* status bubble */
.status { position: absolute; left: 0; bottom: 0; width: 1149px; height: 23px; background: #fff; border-top: 1px solid #e2e2e2; border-right: 1px solid #e2e2e2; border-radius: 0 3px 0 0; font-family: "Open Sans", sans-serif; font-size: 15px; line-height: 23px; color: #3e3e3e; white-space: nowrap; overflow: hidden; z-index: 7; }
.st-a { font-size: 15px; }
.st-b { font-size: 14.550px; }
```
